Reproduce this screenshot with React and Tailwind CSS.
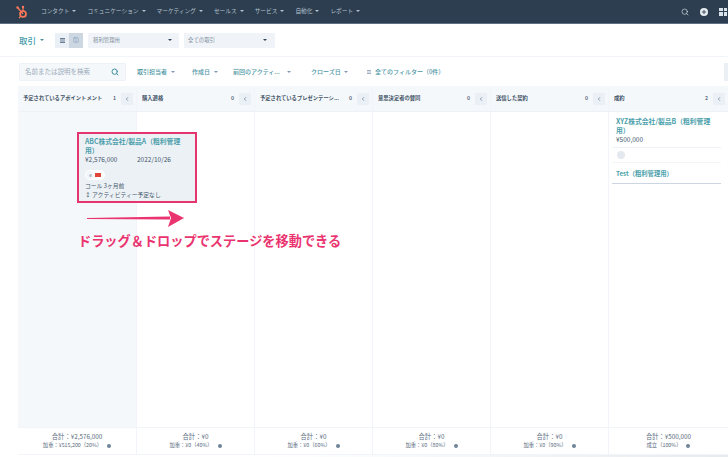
import React from "react";
import { ChevronLeft, Search, Columns2, Plus } from "lucide-react";

const font = { fontFamily: '"Noto Sans CJK JP","Noto Sans",sans-serif' };

const Caret = ({ c = "border-t-[#7c98b6]" }) => (
  <span className={`block w-0 h-0 shrink-0 border-x-[2px] border-x-transparent border-t-[2px] ${c}`} />
);

const navItems = ["コンタクト", "コミュニケーション", "マーケティング", "セールス", "サービス", "自動化", "レポート"];
const filters = [
  ["取引担当者", "w-[55px]", "gap-[4px]"],
  ["作成日", "w-[41px]", "gap-[4px]"],
  ["前回のアクティ...", "w-[78px]", "gap-[7px]"],
  ["クローズ日", "w-[56px]", "gap-[3px]"],
];
const cols = [
  { t: "予定されているアポイントメント", n: 1, total: "合計：¥2,576,000", sub: "加重：¥515,200（20%）", w: "w-[118px]", active: true },
  { t: "購入適格", n: 0, total: "合計：¥0", sub: "加重：¥0（40%）", w: "w-[117px]" },
  { t: "予定されているプレゼンテーシ...", n: 0, total: "合計：¥0", sub: "加重：¥0（60%）", w: "w-[117px]" },
  { t: "意思決定者の賛同", n: 0, total: "合計：¥0", sub: "加重：¥0（80%）", w: "w-[117px]" },
  { t: "送信した契約", n: 0, total: "合計：¥0", sub: "加重：¥0（90%）", w: "w-[117px]" },
  { t: "成約", n: 2, total: "合計：¥500,000", sub: "成立（100%）", w: "flex-1", won: true },
];

const Info = () => (
  <span className="inline-flex w-[4px] h-[4px] rounded-full bg-[#6f8498] ml-[5px]" />
);

export default function App() {
  return (
    <div className="relative w-[728px] h-[457px] overflow-hidden bg-white" style={font}>
      <nav className="h-[24px] bg-[#2d3e50] border-b border-[#5d7186] flex items-center pl-[15px] pr-[1px] text-[#b4c1ce]">
        <svg width="13" height="14" viewBox="0 0 13 14" className="mr-[13px] shrink-0">
          <circle cx="8" cy="9" r="3" fill="none" stroke="#ff7a59" strokeWidth="1.7" />
          <path d="M8 6V2M8 9L3 3M6 11l-2 2" stroke="#ff7a59" strokeWidth="1.2" fill="none" />
          <circle cx="8" cy="2" r="1.2" fill="#ff7a59" />
          <circle cx="2.5" cy="2.5" r="1.2" fill="#ff7a59" />
        </svg>
        <div className="flex items-center gap-[11px] text-[5.7px]">
          {navItems.map((n) => (
            <span key={n} className="flex items-center gap-[3px] whitespace-nowrap">
              {n}
              <Caret c="border-t-[#b4c1ce]" />
            </span>
          ))}
        </div>
        <div className="ml-auto flex items-center gap-[11px]">
          <Search size={8} color="#d5dee6" strokeWidth={2} />
          <span className="w-[8px] h-[8px] rounded-full bg-[#e8eef3] flex items-center justify-center">
            <Plus size={6} color="#2d3e50" strokeWidth={3.5} />
          </span>
          <span className="w-[8px] h-[8px] grid grid-cols-2 gap-[1px]">
            <span className="bg-[#dbe3ea]" /><span className="bg-[#dbe3ea]" /><span className="bg-[#dbe3ea]" /><span className="bg-[#dbe3ea]" />
          </span>
        </div>
      </nav>

      <header className="h-[33px] border-b border-[#f1f4f8] flex items-center pl-[19px]">
        <span className="text-[8.5px] text-[#3f9aa8] font-medium whitespace-nowrap w-[17px]">取引</span>
        <span className="ml-[4px]"><Caret c="border-t-[#4a8e9c]" /></span>
        <div className="ml-[11px] flex h-[15px]">
          <span className="w-[14px] bg-[#eaf0f6] flex items-center justify-center">
            <span className="w-[5px] h-[5px] border-y border-[#6b7f95] bg-[#a9b7c6]" />
          </span>
          <span className="w-[14px] bg-[#cdd7e2] flex items-center justify-center">
            <Columns2 size={6} color="#7c98b6" />
          </span>
        </div>
        <div className="ml-[5px] w-[91px] h-[15px] bg-[#f0f3f7] flex items-center justify-between pl-[5px] pr-[7px] text-[5.4px] text-[#7f8fa0]">
          租利管理用<Caret c="border-t-[#33475b]" />
        </div>
        <div className="ml-[5px] w-[91px] h-[15px] bg-[#f0f3f7] flex items-center justify-between pl-[4px] pr-[8px] text-[5.4px] text-[#7f8fa0]">
          全ての取引<Caret c="border-t-[#33475b]" />
        </div>
      </header>

      <section className="h-[29px] flex items-center pl-[19px]">
        <div className="w-[107px] h-[18px] bg-[#f5f8fa] border border-[#eef2f6] rounded-[1px] flex items-center justify-between pl-[5px] pr-[6px] text-[6.5px] text-[#9aaabb]">
          名前または説明を検索
          <Search size={8} color="#3f8fa0" strokeWidth={3} />
        </div>
        <div className="ml-[11px] flex items-center text-[6px] font-medium text-[#4c96a5]">
          {filters.map(([f, w, g]) => (
            <span key={f} className={`flex items-center whitespace-nowrap ${w} ${g}`}>
              {f}
              <Caret />
            </span>
          ))}
        </div>
        <span className="flex items-center gap-[4px] text-[6px] font-medium text-[#4c96a5] whitespace-nowrap">
          <span className="w-[4px] h-[4px] border-y border-[#9fb0c1] bg-[#d5dde5]" />
          全てのフィルター（0件）
        </span>
        <span className="ml-auto w-[4px] h-[18px] bg-[#eaf0f6]" />
      </section>

      <main className="ml-[18px] flex h-[369px] gap-[1px] bg-[#f1f4f8]">
        {cols.map((c) => (
          <div key={c.t} className={`${c.w} flex flex-col bg-white`}>
            <div className="h-[26px] bg-[#f5f8fa] border-b border-[#eef2f6] flex items-center pl-[5px] pr-[3px] text-[5.3px] font-bold text-[#3d5166] shrink-0">
              <span className="flex-1 whitespace-nowrap overflow-hidden">{c.t}</span>
              <span className="mx-[5px] font-medium">{c.n}</span>
              <span className="w-[12px] h-[12px] bg-[#eaf0f6] rounded-[1px] flex items-center justify-center">
                <ChevronLeft size={6} color="#516f90" strokeWidth={2.5} />
              </span>
            </div>
            <div className={`flex-1 min-h-0 ${c.active ? "bg-[#f5f8fa]" : "bg-white"} ${c.won ? "pt-[5px] pl-[3px] pr-[7px]" : ""}`}>
              {c.won && (
                <div className="text-[#33475b]">
                  <div className="pl-[4px] pr-[6px] pb-[3px] border-b border-[#eef2f6] bg-white">
                    <div className="text-[6.8px] leading-[9px] font-semibold text-[#4c9fac]">XYZ株式会社/製品B（粗利管理用）</div>
                    <div className="text-[6.5px] leading-[9px] text-[#44586c]">¥500,000</div>
                  </div>
                  <div className="h-[15px] pl-[5px] flex items-center border-b border-[#f3f5f8]">
                    <span className="w-[8px] h-[8px] rounded-full bg-[#e4e8ef]" />
                  </div>
                  <div className="mt-[3px] h-[18px] pl-[4px] border-b border-[#cbd6e2] text-[6.3px] leading-[16px] font-semibold text-[#4c9fac]">
                    Test（粗利管理用）
                  </div>
                </div>
              )}
            </div>
            <div className="h-[28px] border-t border-[#f1f4f8] border-b bg-white flex flex-col items-center justify-center shrink-0">
              <div className="text-[6.3px] leading-[9px] text-[#596b7e] whitespace-nowrap">{c.total}</div>
              <div className="text-[5.3px] leading-[9px] text-[#596b7e] flex items-center whitespace-nowrap">{c.sub}<Info /></div>
            </div>
          </div>
        ))}
      </main>

      <div className="absolute left-[270px] right-0 bottom-0 h-[2px] bg-gradient-to-r from-white to-[#e8ebee]" />

      <article className="absolute left-[77px] top-[132px] w-[120px] h-[71px] border-2 border-[#e5356f] bg-[#ecf1f5] pl-[6px] pr-[12px] pt-[3px]">
        <div className="text-[6.8px] leading-[9px] font-semibold text-[#4c9fac]">ABC株式会社/製品A（粗利管理用）</div>
        <div className="flex text-[6.5px] leading-[9px] text-[#44586c] whitespace-nowrap">
          <span className="w-[52px]">¥2,576,000</span><span>2022/10/26</span>
        </div>
        <div className="flex items-center mt-[6px] h-[10px] w-[20px] rounded-full bg-white pl-[1px]">
          <span className="w-[8px] h-[8px] rounded-full bg-[#f3f5f8] flex items-center justify-center">
            <span className="w-[3px] h-[3px] rounded-full bg-[#b8c4d0]" />
          </span>
          <span className="w-[6px] h-[4px] bg-[#e0453a] ml-[1px]" />
        </div>
        <div className="mt-[1px] text-[5.8px] leading-[9px] text-[#44586c] whitespace-nowrap">コール 3ヶ月前</div>
        <div className="text-[5.8px] leading-[9px] text-[#44586c] whitespace-nowrap">↕ アクティビティー予定なし</div>
      </article>

      <svg className="absolute left-[86px] top-[208px]" width="100" height="22" viewBox="0 0 100 22">
        <path d="M1 10L84 8.5V11.5L1 11Z" fill="#ea3470" />
        <path d="M82 2L98 10L82 19L85 10Z" fill="#ea3470" />
      </svg>
      <div className="absolute left-[78px] top-[232px] text-[13.2px] leading-[18px] font-bold text-[#ea3470] whitespace-nowrap">
        ドラッグ＆ドロップでステージを移動できる
      </div>
    </div>
  );
}
